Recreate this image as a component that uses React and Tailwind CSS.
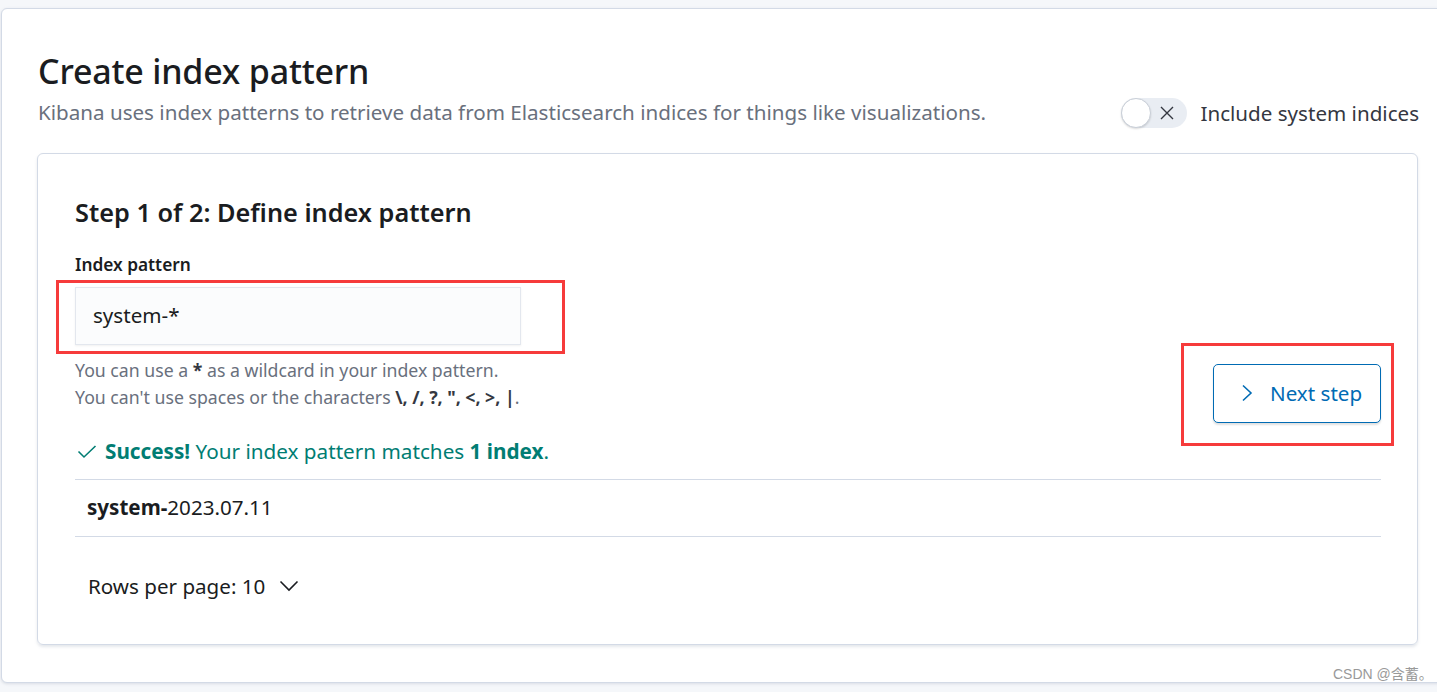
import React from "react";

const font = { fontFamily: '"Noto Sans", "Open Sans", sans-serif' };

export default function App() {
  return (
    <div className="w-[1437px] h-[692px] bg-[#f5f7fa] overflow-hidden relative" style={font}>
      <div className="absolute left-[1px] top-[8px] w-[1480px] h-[675px] bg-white border border-[#d3dae6] rounded-[6px] shadow-[0_1px_3px_rgba(152,162,179,0.3)]">
        <div className="pl-[35px] pt-[42px] w-[1417px]">
          <h1 className="text-[34px] leading-[40px] font-medium text-[#1a1c21] tracking-[-0.2px] pl-[1px]">Create index pattern</h1>
          <div className="flex items-center justify-between mt-[4px] pl-[1px]">
            <p className="text-[20.6px] leading-[28px] text-[#69707d]">
              Kibana uses index patterns to retrieve data from Elasticsearch indices for things like visualizations.
            </p>
            <div className="flex items-center gap-[13px] mt-[3px]">
              <div className="w-[66px] h-[30px] rounded-full bg-[#e9edf3] relative flex items-center">
                <div className="w-[30px] h-[30px] rounded-full bg-white border border-[#c9cfd8] shadow-[0_1px_2px_rgba(0,0,0,0.15)]" />
                <svg className="absolute left-[38px] top-[7px]" width="16" height="16" viewBox="0 0 16 16" fill="none" stroke="#343741" strokeWidth="1.4">
                  <path d="M2 2 L14 14 M14 2 L2 14" />
                </svg>
              </div>
              <span className="text-[20.6px] text-[#343741]">Include system indices</span>
            </div>
          </div>

          <div className="mt-[24px] w-[1381px] h-[492px] border border-[#d3dae6] rounded-[6px] shadow-[0_2px_3px_rgba(152,162,179,0.25)] pl-[37px] pr-[36px] pt-[40px]">
            <h2 className="text-[25.3px] leading-[36px] font-semibold text-[#1a1c21]">Step 1 of 2: Define index pattern</h2>
            <div className="flex justify-between">
              <div className="pt-[23px]">
                <div className="text-[17.3px] leading-[24px] font-semibold text-[#1a1c21]">Index pattern</div>
                <div className="mt-[10px] relative">
                  <div className="absolute left-[-19px] top-[-7px] w-[509px] h-[74px] border-[3px] border-[#f63b3b]" />
                  <div className="w-[446px] h-[58px] bg-[#fbfcfd] border border-[#e3e7ee] shadow-[0_1px_2px_rgba(0,0,0,0.06)] flex items-center pl-[17px] text-[20.6px] text-[#1a1c21]">
                    system-*
                  </div>
                </div>
                <div className="mt-[12px] text-[17.7px] leading-[27px] text-[#69707d]">
                  <div>You can use a <b className="text-[#343741]">*</b> as a wildcard in your index pattern.</div>
                  <div>You can't use spaces or the characters <b className="text-[#343741]">\, /, ?, ", &lt;, &gt;, |</b>.</div>
                </div>
                <div className="mt-[26px] flex items-center text-[20.7px] leading-[28px] text-[#017d73] whitespace-nowrap">
                  <svg width="20" height="16" viewBox="0 0 20 16" fill="none" stroke="#017d73" strokeWidth="1.6" className="ml-[2px] mr-[8px]">
                    <path d="M1.5 8.5 L7 14 L18.5 3" />
                  </svg>
                  <span><b className="font-bold">Success!</b> Your index pattern matches <b className="font-bold">1 index</b>.</span>
                </div>
              </div>
              <div className="relative mt-[134px] self-start">
                <div className="absolute left-[-32px] top-[-21px] w-[213px] h-[103px] border-[3px] border-[#f63b3b]" />
                <button className="w-[168px] h-[59px] rounded-[5px] border border-[#006bb4] bg-white text-[#006bb4] text-[20.6px] flex items-center shadow-[0_2px_2px_rgba(0,0,0,0.12)]">
                  <svg className="ml-[27px]" width="12" height="18" viewBox="0 0 12 18" fill="none" stroke="#006bb4" strokeWidth="1.6">
                    <path d="M2 1.5 L10 9 L2 16.5" />
                  </svg>
                  <span className="ml-[17px]">Next step</span>
                </button>
              </div>
            </div>

            <div className="mt-[14px] border-t border-b border-[#d3dae6] h-[58px] flex items-center pl-[12px] text-[20.6px] text-[#1a1c21]">
              <span><b className="font-bold">system-</b>2023.07.11</span>
            </div>

            <div className="mt-[34px] flex items-center pl-[13px] text-[20.6px] text-[#1a1c21]">
              <span>Rows per page: 10</span>
              <svg className="ml-[14px]" width="20" height="12" viewBox="0 0 20 12" fill="none" stroke="#1a1c21" strokeWidth="1.6">
                <path d="M1.5 1.5 L10 10 L18.5 1.5" />
              </svg>
            </div>
          </div>
        </div>
      </div>
      <div className="absolute left-[1333px] top-[664px] text-[14px] text-[#999] leading-[20px]" style={{ fontFamily: '"Liberation Sans", "Noto Sans CJK SC", sans-serif' }}>
        CSDN @含蓄。
      </div>
    </div>
  );
}
